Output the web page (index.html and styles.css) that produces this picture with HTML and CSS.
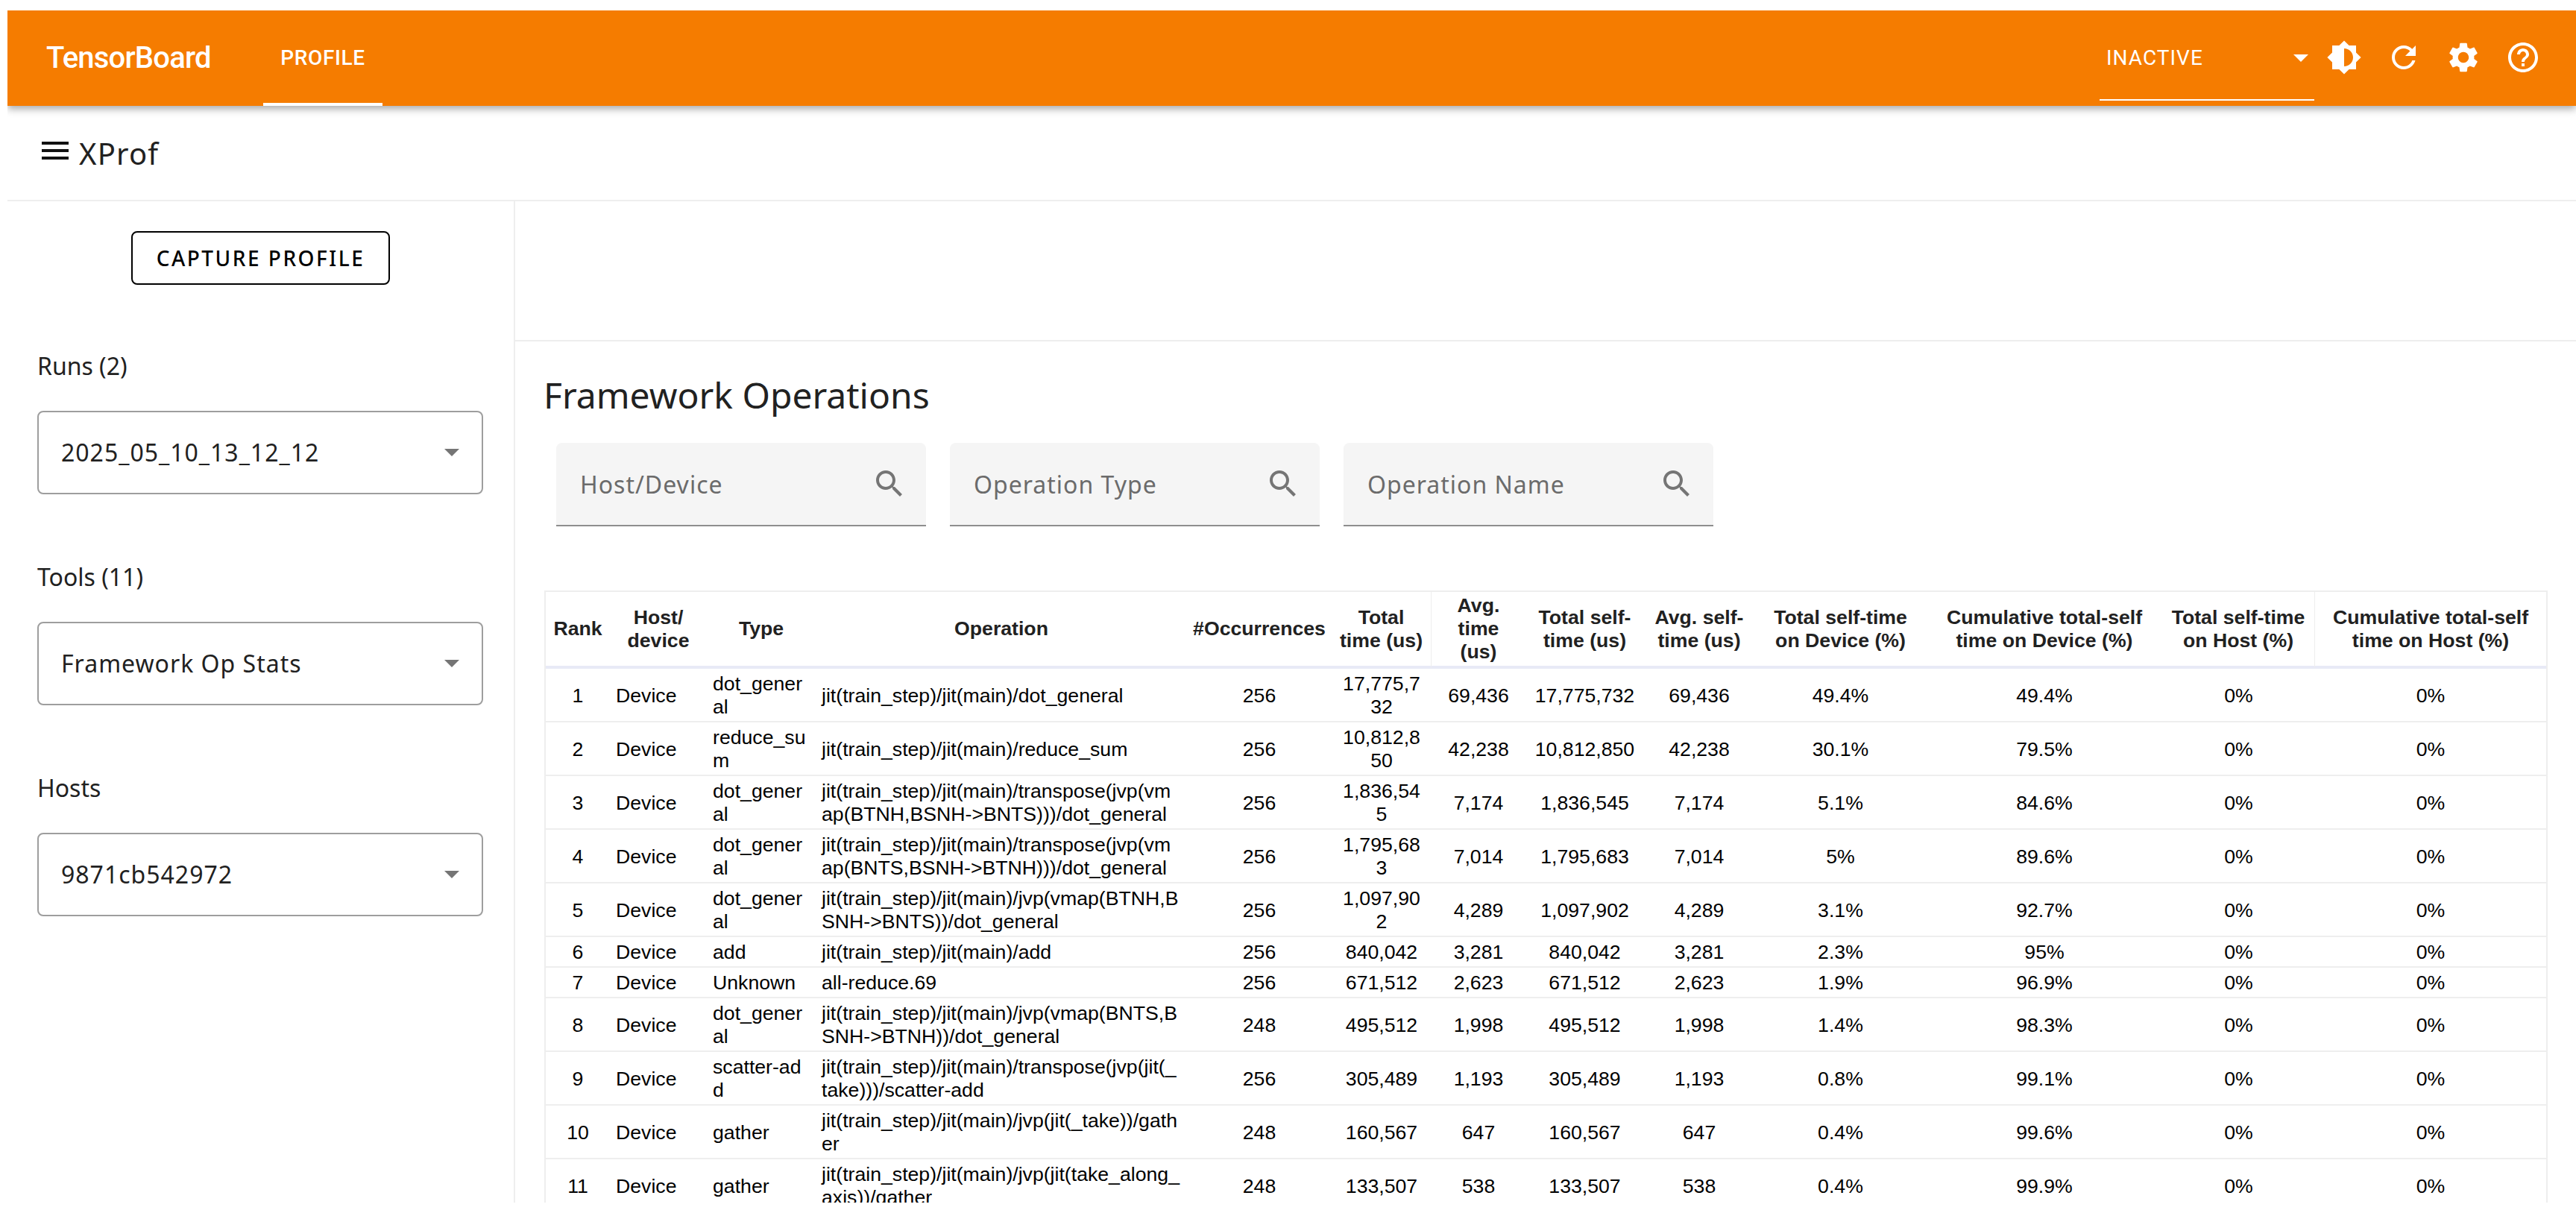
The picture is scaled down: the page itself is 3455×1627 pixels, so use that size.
FILE: index.html
```html
<!DOCTYPE html>
<html lang="en">
<head>
    <meta charset="UTF-8">
    <title>TensorBoard</title>
    <link rel="stylesheet" href="styles.css">
</head>
<body>

<div class="app">
    <header class="toolbar">
        <div class="brand">TensorBoard</div>
        <div class="tab">PROFILE</div>
        <div class="spacer"></div>
        <div class="plugin-select">
            <span>INACTIVE</span>
            <i class="caret caret-white"></i>
        </div>
        <div class="icon-btn">
            <svg viewBox="0 0 24 24"><path d="M20 15.31L23.31 12 20 8.69V4h-4.69L12 .69 8.69 4H4v4.69L.69 12 4 15.31V20h4.69L12 23.31 15.31 20H20v-4.69zM12 18V6c3.31 0 6 2.69 6 6s-2.69 6-6 6z"/></svg>
        </div>
        <div class="icon-btn">
            <svg viewBox="0 0 24 24"><path d="M17.65 6.35C16.2 4.9 14.21 4 12 4c-4.42 0-7.99 3.58-7.99 8s3.57 8 7.99 8c3.73 0 6.84-2.55 7.73-6h-2.08c-.82 2.33-3.04 4-5.65 4-3.31 0-6-2.69-6-6s2.69-6 6-6c1.66 0 3.14.69 4.22 1.78L13 11h7V4l-2.35 2.35z"/></svg>
        </div>
        <div class="icon-btn">
            <svg viewBox="0 0 24 24"><path d="M19.14 12.94c.04-.3.06-.61.06-.94 0-.32-.02-.64-.07-.94l2.03-1.58c.18-.14.23-.41.12-.61l-1.92-3.32c-.12-.22-.37-.29-.59-.22l-2.39.96c-.5-.38-1.03-.7-1.62-.94l-.36-2.54c-.04-.24-.24-.41-.48-.41h-3.84c-.24 0-.43.17-.47.41l-.36 2.54c-.59.24-1.13.57-1.62.94l-2.39-.96c-.22-.08-.47 0-.59.22L2.74 8.87c-.12.21-.08.47.12.61l2.03 1.58c-.05.3-.09.63-.09.94s.02.64.07.94l-2.03 1.58c-.18.14-.23.41-.12.61l1.92 3.32c.12.22.37.29.59.22l2.39-.96c.5.38 1.03.7 1.62.94l.36 2.54c.05.24.24.41.48.41h3.84c.24 0 .44-.17.47-.41l.36-2.54c.59-.24 1.13-.56 1.62-.94l2.39.96c.22.08.47 0 .59-.22l1.92-3.32c.12-.22.07-.47-.12-.61l-2.01-1.58zM12 15.6c-1.98 0-3.6-1.62-3.6-3.6s1.62-3.6 3.6-3.6 3.6 1.62 3.6 3.6-1.62 3.6-3.6 3.6z"/></svg>
        </div>
        <div class="icon-btn">
            <svg viewBox="0 0 24 24"><path d="M11 18h2v-2h-2v2zm1-16C6.48 2 2 6.48 2 12s4.48 10 10 10 10-4.48 10-10S17.52 2 12 2zm0 18c-4.41 0-8-3.59-8-8s3.59-8 8-8 8 3.59 8 8-3.59 8-8 8zm0-14c-2.21 0-4 1.79-4 4h2c0-1.1.9-2 2-2s2 .9 2 2c0 2-3 1.75-3 5h2c0-2.25 3-2.5 3-5 0-2.21-1.79-4-4-4z"/></svg>
        </div>
    </header>

    <div class="subheader">
        <svg class="menu-icon" viewBox="0 0 24 24"><path d="M3 18h18v-2H3v2zm0-5h18v-2H3v2zm0-7v2h18V6H3z"/></svg>
        <span class="subheader-title">XProf</span>
    </div>

    <div class="main">
        <aside class="sidebar">
            <div class="capture-row">
                <div class="capture-btn">CAPTURE PROFILE</div>
            </div>

            <div class="field-label">Runs (2)</div>
            <div class="select-box">
                <span>2025_05_10_13_12_12</span>
                <i class="caret"></i>
            </div>

            <div class="field-label">Tools (11)</div>
            <div class="select-box">
                <span>Framework Op Stats</span>
                <i class="caret"></i>
            </div>

            <div class="field-label">Hosts</div>
            <div class="select-box">
                <span>9871cb542972</span>
                <i class="caret"></i>
            </div>
        </aside>

        <section class="content">
            <div class="content-top"></div>
            <div class="content-body">
                <h2 class="page-title">Framework Operations</h2>

                <div class="filters">
                    <div class="filter">
                        <span>Host/Device</span>
                        <svg viewBox="0 0 24 24"><path d="M15.5 14h-.79l-.28-.27C15.41 12.59 16 11.11 16 9.5 16 5.91 13.09 3 9.5 3S3 5.91 3 9.5 5.91 16 9.5 16c1.61 0 3.09-.59 4.23-1.57l.27.28v.79l5 4.99L20.49 19l-4.99-5zm-6 0C7.01 14 5 11.99 5 9.5S7.01 5 9.5 5 14 7.01 14 9.5 11.99 14 9.5 14z"/></svg>
                    </div>
                    <div class="filter">
                        <span>Operation Type</span>
                        <svg viewBox="0 0 24 24"><path d="M15.5 14h-.79l-.28-.27C15.41 12.59 16 11.11 16 9.5 16 5.91 13.09 3 9.5 3S3 5.91 3 9.5 5.91 16 9.5 16c1.61 0 3.09-.59 4.23-1.57l.27.28v.79l5 4.99L20.49 19l-4.99-5zm-6 0C7.01 14 5 11.99 5 9.5S7.01 5 9.5 5 14 7.01 14 9.5 11.99 14 9.5 14z"/></svg>
                    </div>
                    <div class="filter">
                        <span>Operation Name</span>
                        <svg viewBox="0 0 24 24"><path d="M15.5 14h-.79l-.28-.27C15.41 12.59 16 11.11 16 9.5 16 5.91 13.09 3 9.5 3S3 5.91 3 9.5 5.91 16 9.5 16c1.61 0 3.09-.59 4.23-1.57l.27.28v.79l5 4.99L20.49 19l-4.99-5zm-6 0C7.01 14 5 11.99 5 9.5S7.01 5 9.5 5 14 7.01 14 9.5 11.99 14 9.5 14z"/></svg>
                    </div>
                </div>

                <table class="stats-table">
                    <colgroup>
                        <col class="c-rank"><col class="c-host"><col class="c-type"><col class="c-op"><col class="c-occ">
                        <col class="c-total"><col class="c-avg"><col class="c-self"><col class="c-avgself">
                        <col class="c-devpct"><col class="c-devcum"><col class="c-hostpct"><col class="c-hostcum">
                    </colgroup>
                    <thead>
                        <tr>
                            <th>Rank</th>
                            <th>Host/<br>device</th>
                            <th>Type</th>
                            <th>Operation</th>
                            <th>#Occurrences</th>
                            <th class="th-divider">Total time (us)</th>
                            <th>Avg. time (us)</th>
                            <th>Total self-time (us)</th>
                            <th>Avg. self-time (us)</th>
                            <th>Total self-time on Device (%)</th>
                            <th>Cumulative total-self time on Device (%)</th>
                            <th class="th-divider">Total self-time on Host (%)</th>
                            <th>Cumulative total-self time on Host (%)</th>
                        </tr>
                    </thead>
                    <tbody>
                        <tr><td class="num">1</td><td>Device</td><td>dot_general</td><td>jit(train_step)/jit(main)/dot_general</td><td class="num">256</td><td class="num">17,775,732</td><td class="num">69,436</td><td class="num">17,775,732</td><td class="num">69,436</td><td class="num">49.4%</td><td class="num">49.4%</td><td class="num">0%</td><td class="num">0%</td></tr>
                        <tr><td class="num">2</td><td>Device</td><td>reduce_sum</td><td>jit(train_step)/jit(main)/reduce_sum</td><td class="num">256</td><td class="num">10,812,850</td><td class="num">42,238</td><td class="num">10,812,850</td><td class="num">42,238</td><td class="num">30.1%</td><td class="num">79.5%</td><td class="num">0%</td><td class="num">0%</td></tr>
                        <tr><td class="num">3</td><td>Device</td><td>dot_general</td><td>jit(train_step)/jit(main)/transpose(jvp(vmap(BTNH,BSNH-&gt;BNTS)))/dot_general</td><td class="num">256</td><td class="num">1,836,545</td><td class="num">7,174</td><td class="num">1,836,545</td><td class="num">7,174</td><td class="num">5.1%</td><td class="num">84.6%</td><td class="num">0%</td><td class="num">0%</td></tr>
                        <tr><td class="num">4</td><td>Device</td><td>dot_general</td><td>jit(train_step)/jit(main)/transpose(jvp(vmap(BNTS,BSNH-&gt;BTNH)))/dot_general</td><td class="num">256</td><td class="num">1,795,683</td><td class="num">7,014</td><td class="num">1,795,683</td><td class="num">7,014</td><td class="num">5%</td><td class="num">89.6%</td><td class="num">0%</td><td class="num">0%</td></tr>
                        <tr><td class="num">5</td><td>Device</td><td>dot_general</td><td>jit(train_step)/jit(main)/jvp(vmap(BTNH,BSNH-&gt;BNTS))/dot_general</td><td class="num">256</td><td class="num">1,097,902</td><td class="num">4,289</td><td class="num">1,097,902</td><td class="num">4,289</td><td class="num">3.1%</td><td class="num">92.7%</td><td class="num">0%</td><td class="num">0%</td></tr>
                        <tr><td class="num">6</td><td>Device</td><td>add</td><td>jit(train_step)/jit(main)/add</td><td class="num">256</td><td class="num">840,042</td><td class="num">3,281</td><td class="num">840,042</td><td class="num">3,281</td><td class="num">2.3%</td><td class="num">95%</td><td class="num">0%</td><td class="num">0%</td></tr>
                        <tr><td class="num">7</td><td>Device</td><td>Unknown</td><td>all-reduce.69</td><td class="num">256</td><td class="num">671,512</td><td class="num">2,623</td><td class="num">671,512</td><td class="num">2,623</td><td class="num">1.9%</td><td class="num">96.9%</td><td class="num">0%</td><td class="num">0%</td></tr>
                        <tr><td class="num">8</td><td>Device</td><td>dot_general</td><td>jit(train_step)/jit(main)/jvp(vmap(BNTS,BSNH-&gt;BTNH))/dot_general</td><td class="num">248</td><td class="num">495,512</td><td class="num">1,998</td><td class="num">495,512</td><td class="num">1,998</td><td class="num">1.4%</td><td class="num">98.3%</td><td class="num">0%</td><td class="num">0%</td></tr>
                        <tr><td class="num">9</td><td>Device</td><td>scatter-add</td><td>jit(train_step)/jit(main)/transpose(jvp(jit(_take)))/scatter-add</td><td class="num">256</td><td class="num">305,489</td><td class="num">1,193</td><td class="num">305,489</td><td class="num">1,193</td><td class="num">0.8%</td><td class="num">99.1%</td><td class="num">0%</td><td class="num">0%</td></tr>
                        <tr><td class="num">10</td><td>Device</td><td>gather</td><td>jit(train_step)/jit(main)/jvp(jit(_take))/gather</td><td class="num">248</td><td class="num">160,567</td><td class="num">647</td><td class="num">160,567</td><td class="num">647</td><td class="num">0.4%</td><td class="num">99.6%</td><td class="num">0%</td><td class="num">0%</td></tr>
                        <tr><td class="num">11</td><td>Device</td><td>gather</td><td>jit(train_step)/jit(main)/jvp(jit(take_along_axis))/gather</td><td class="num">248</td><td class="num">133,507</td><td class="num">538</td><td class="num">133,507</td><td class="num">538</td><td class="num">0.4%</td><td class="num">99.9%</td><td class="num">0%</td><td class="num">0%</td></tr>
                    </tbody>
                </table>
            </div>
        </section>
    </div>
</div>

</body>
</html>
```

FILE: styles.css
```css
html, body {
    height: 100%;
}
body {
    margin: 0;
    padding: 14px 0 14px 10px;
    box-sizing: border-box;
    overflow: hidden;
    background-color: white;
    font-family: "Noto Sans", sans-serif;
    color: #212121;
}
.app {
    height: 100%;
    display: flex;
    flex-direction: column;
    overflow: hidden;
}

/* top bar */
.toolbar {
    flex: none;
    height: 128px;
    display: flex;
    align-items: stretch;
    padding: 0 31px 0 52px;
    background-color: #f57c00;
    color: white;
    font-family: Roboto, sans-serif;
    box-shadow: 0 4px 10px rgba(0, 0, 0, 0.35);
    position: relative;
    z-index: 2;
}
.brand {
    width: 291px;
    font-size: 40px;
    font-weight: 500;
    letter-spacing: -0.8px;
    line-height: 128px;
}
.tab {
    width: 160px;
    box-sizing: border-box;
    border-bottom: 4px solid white;
    text-align: center;
    font-size: 28px;
    font-weight: 500;
    letter-spacing: 0.6px;
    line-height: 128px;
}
.spacer {
    flex: 1;
}
.plugin-select {
    width: 288px;
    height: 121px;
    box-sizing: border-box;
    padding: 8px 8px 0 9px;
    border-bottom: 2px solid white;
    display: flex;
    align-items: center;
    justify-content: space-between;
    font-size: 28px;
    letter-spacing: 1px;
}
.icon-btn {
    width: 80px;
    height: 126px;
    display: flex;
    align-items: center;
    justify-content: center;
}
.icon-btn svg {
    width: 48px;
    height: 48px;
    fill: white;
}
.caret {
    width: 0;
    height: 0;
    border-left: 10px solid transparent;
    border-right: 10px solid transparent;
    border-top: 10px solid #757575;
}
.caret-white {
    border-top-color: white;
}

/* xprof title */
.subheader {
    flex: none;
    height: 126px;
    border-bottom: 2px solid #eeeeee;
    display: flex;
    align-items: center;
    padding-left: 40px;
}
.menu-icon {
    width: 48px;
    height: 48px;
    margin: -6px 8px 0 0;
    fill: #111111;
}
.subheader-title {
    font-size: 40px;
    letter-spacing: 1.2px;
}

.main {
    flex: 1;
    min-height: 0;
    display: flex;
}
.sidebar {
    flex: none;
    width: 679px;
    border-right: 2px solid #eeeeee;
}
.capture-row {
    display: flex;
    justify-content: center;
    padding-top: 40px;
    margin-bottom: 87px;
}
.capture-btn {
    width: 347px;
    height: 72px;
    box-sizing: border-box;
    border: 2px solid black;
    border-radius: 8px;
    display: flex;
    align-items: center;
    justify-content: center;
    font-size: 28px;
    font-weight: 500;
    letter-spacing: 2.5px;
    color: black;
}
.field-label {
    margin: 0 0 38px 40px;
    font-size: 32px;
    line-height: 44px;
}
.select-box {
    width: 598px;
    height: 112px;
    box-sizing: border-box;
    margin: 0 0 89px 40px;
    padding: 0 30px 0 30px;
    border: 2px solid #9e9e9e;
    border-radius: 8px;
    display: flex;
    align-items: center;
    justify-content: space-between;
    font-size: 32px;
    letter-spacing: 1px;
}
.select-box span {
    padding-bottom: 2px;
}

/* right part */
.content {
    flex: 1;
    min-width: 0;
    display: flex;
    flex-direction: column;
}
.content-top {
    flex: none;
    height: 186px;
    border-bottom: 2px solid #eeeeee;
}
.content-body {
    flex: 1;
    min-height: 0;
    overflow: hidden;
    padding: 0 39px;
}
.page-title {
    margin: 39px 0 31px -1px;
    font-size: 48px;
    font-weight: 400;
    line-height: 66px;
}
.filters {
    display: flex;
    gap: 32px;
    padding-left: 16px;
    margin-bottom: 86px;
}
.filter {
    width: 496px;
    height: 112px;
    box-sizing: border-box;
    padding: 0 25px 0 32px;
    background-color: #f5f5f5;
    border-bottom: 2px solid #8e8e8e;
    border-radius: 8px 8px 0 0;
    display: flex;
    align-items: center;
    justify-content: space-between;
    font-size: 32px;
    letter-spacing: 1px;
    color: #6b6b6b;
}
.filter svg {
    width: 48px;
    height: 48px;
    fill: #757575;
}

/* table */
.stats-table {
    width: 2686px;
    table-layout: fixed;
    border-collapse: separate;
    border-spacing: 0;
    border: solid #eeeeee;
    border-width: 2px 2px 0 2px;
    font-family: "Liberation Sans", Arial, sans-serif;
    font-size: 26.67px;
    line-height: 31px;
    color: black;
}
.stats-table th {
    padding: 3px 8px;
    border-bottom: 4px solid #e8eaf6;
    text-align: center;
    font-weight: bold;
    color: #212121;
}
.stats-table .th-divider {
    border-right: 1px solid #eeeeee;
}
.stats-table td {
    padding: 5px 8px 3px;
    border-bottom: 2px solid #eeeeee;
    word-break: break-all;
}
.stats-table td.num {
    text-align: center;
}
.c-rank { width: 86px; }
.c-host { width: 130px; }
.c-type { width: 146px; }
.c-op { width: 498px; }
.c-occ { width: 194px; }
.c-total { width: 134px; }
.c-avg { width: 126px; }
.c-self { width: 159px; }
.c-avgself { width: 148px; }
.c-devpct { width: 231px; }
.c-devcum { width: 316px; }
.c-hostpct { width: 205px; }
.c-hostcum { width: 310px; }
```
